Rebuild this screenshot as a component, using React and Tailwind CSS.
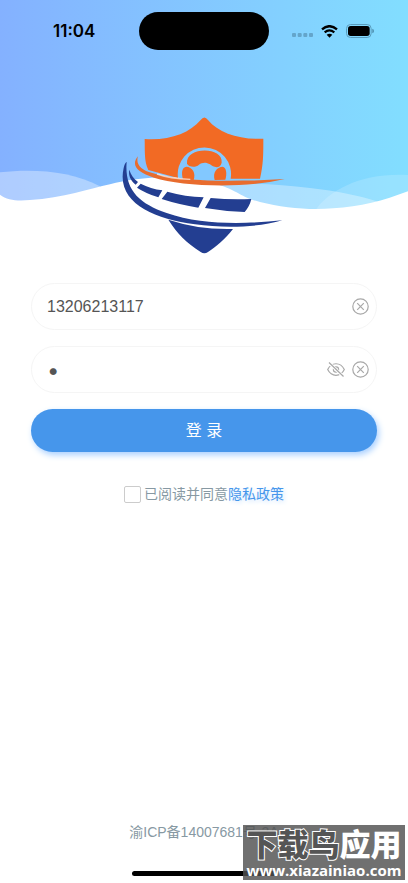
import { useState } from "react";

function StatusBar() {
  return (
    <div className="grid h-[62px] grid-cols-[1fr_130px_1fr] items-center">
      <time className="pl-[53px] font-['Inter',sans-serif] text-[17px] leading-6 font-semibold text-black">11:04</time>
      <div className="h-[38px] rounded-full bg-black" />
      <div className="flex items-center justify-end gap-2 pr-[34px]">
        <svg className="mt-2 h-1 w-[21px] shrink-0" viewBox="0 0 21 4" fill="#64a5cb" aria-hidden="true">
          <rect x="0" width="4" height="4" rx="1" />
          <rect x="5.7" width="4" height="4" rx="1" />
          <rect x="11.3" width="4" height="4" rx="1" />
          <rect x="17" width="4" height="4" rx="1" />
        </svg>
        <svg className="h-[13px] w-[17px] shrink-0" viewBox="0 0 51 39" aria-hidden="true">
          <path d="M3 13Q25 -6 48 13" fill="none" stroke="#000" strokeWidth="7" />
          <path d="M11 22Q25 10 40 22" fill="none" stroke="#000" strokeWidth="6.5" />
          <path d="M17 29Q25.500 23 34 29L25.500 38Z" fill="#000" />
        </svg>
        <svg className="h-[14px] w-7 shrink-0" viewBox="0 0 84 42" aria-hidden="true">
          <rect x="1.500" y="1.500" width="74" height="39" rx="12" fill="none" stroke="#5a9dbd" strokeWidth="3" />
          <rect x="6" y="6" width="65" height="30" rx="8" fill="#000" />
          <path d="M79 14q5 1 5 7t-5 7z" fill="#4e8faf" />
        </svg>
      </div>
    </div>
  );
}

function Waves() {
  return (
    <svg className="h-[70px] w-full" viewBox="0 0 1224 210" preserveAspectRatio="none" aria-hidden="true">
      <path d="M0 70C100 58 215 66 300 112L300 210H0Z" fill="#fff" fillOpacity=".35" />
      <path d="M600 110C700 98 820 104 930 117C1010 126 1080 140 1130 157L1130 210H600Z" fill="#fff" fillOpacity=".34" />
      <path d="M945 185C990 120 1090 70 1224 78V210H945Z" fill="#fff" fillOpacity=".17" />
      <path d="M0 137C22 153 50 157 90 153C190 148 270 118 330 106C410 84 540 73 640 103C710 121 720 145 780 159C850 177 930 184 1000 178C1080 174 1150 155 1224 127V210H0Z" fill="#fff" />
    </svg>
  );
}

function Logo() {
  return (
    <svg className="mx-auto h-[137px] w-41" viewBox="36 21 492 411" role="img" aria-label="logo">
      <path d="M104 87C178 92 238 70 272 30Q283 15 294 30C326 69 390 90 460 86C460 135 460 162 450 206H362A80 80 0 1 0 204 204L115 180C102 153 105 120 104 87Z" fill="#f26a24" />
      <path d="M205 180H360V209H205Z" fill="#82c8ff" />
      <path d="M231 161C226 109 340 109 335 158C331 178 309 172 300 163C289 156 276 157 267 164C256 174 236 171 231 161Z" fill="#f26a24" />
      <path d="M219 208C213 189 216 171 229 170C247 171 258 188 251 210Z" fill="#f26a24" />
      <path d="M346 209C352 189 348 171 338 170C321 171 307 187 314 210Z" fill="#f26a24" />
      <path d="M84 139C76 163 94 181 127 189C213 216 378 216 524 207C398 237 215 229 132 203C80 186 62 165 84 139Z" fill="#e86c2e" />
      <path d="M141 192C168 202 208 207 241 208" fill="none" stroke="#fff" strokeOpacity=".65" strokeWidth="4" />
      <path d="M50 155C43 237 84 279 170 309C275 346 406 342 517 331C438 354 337 354 255 343C128 327 18 276 41 174Q44 159 50 155Z" fill="#233e91" />
      <path d="M58 179C62 194 71 206 84 216L77 224C60 210 55 195 58 179Z" fill="#233e91" />
      <path d="M92 221Q122 236 157 241L145 262Q107 250 81 233Z" fill="#233e91" />
      <path d="M172 245Q226 260 281 262L265 293Q204 283 155 267Z" fill="#233e91" />
      <path d="M302 264Q363 270 424 267Q419 289 404 306Q343 304 285 294Z" fill="#233e91" />
      <path d="M175 329Q268 360 369 357C345 388 317 411 294 426Q283 434 272 426C229 398 202 371 175 329Z" fill="#233e91" />
    </svg>
  );
}

function ClearButton({ label, onClick }) {
  return (
    <button type="button" aria-label={label} onClick={onClick} className="shrink-0 text-[#a8a8a8]">
      <svg className="size-[17px]" viewBox="0 0 17 17" fill="none" stroke="currentColor" strokeWidth="1.200" aria-hidden="true">
        <circle cx="8.500" cy="8.500" r="7.700" />
        <path d="m5.200 5.200 6.600 6.600m0-6.600-6.600 6.600" />
      </svg>
    </button>
  );
}

function LoginForm() {
  const [phone, setPhone] = useState("13206213117");
  const [password, setPassword] = useState("1");
  const [visible, setVisible] = useState(false);
  const field = "flex h-[47px] items-center gap-[7px] rounded-full border border-[#f5f5f5] bg-white pr-[7px] pl-[15px]";
  const input = "h-full min-w-0 flex-1 bg-transparent text-[#555] outline-none";
  return (
    <form className="flex flex-col gap-4 px-[31px]" onSubmit={(e) => e.preventDefault()}>
      <div className={field}>
        <input className={`${input} text-[16px]`} aria-label="手机号" type="tel" value={phone} onChange={(e) => setPhone(e.target.value)} />
        <ClearButton label="清空手机号" onClick={() => setPhone("")} />
      </div>
      <div className={field}>
        <input
          className={`${input} ${visible ? "text-[16px]" : "font-['Inter',sans-serif] text-[22px]"}`}
          aria-label="密码"
          type={visible ? "text" : "password"}
          value={password}
          onChange={(e) => setPassword(e.target.value)}
        />
        <button type="button" aria-label="显示密码" onClick={() => setVisible(!visible)} className="shrink-0 text-[#a8a8a8]">
          <svg className="h-[15px] w-[18px]" viewBox="0 0 18 15" fill="none" stroke="currentColor" strokeWidth="1.200" aria-hidden="true">
            <path d="M.700 7.500C4.500-.200 13.500-.200 17.300 7.500C13.500 15.200 4.500 15.200.700 7.500Z" />
            <circle cx="9" cy="7.500" r="2.600" />
            <path d="M1.500.500 16.500 14.500" stroke="#fff" strokeWidth="3" />
            <path d="M2 .500 16.500 14.500" />
          </svg>
        </button>
        <ClearButton label="清空密码" onClick={() => setPassword("")} />
      </div>
      <button type="submit" className="h-[43px] rounded-full bg-[#4696eb] text-[16px] text-white shadow-[2px_3px_6px_#a9d0ff]">
        登 录
      </button>
      <div className="mt-4 flex items-center justify-center gap-[3px] text-[14px] leading-5 text-[#8799a3]">
        <input id="agree" type="checkbox" className="size-[17px] appearance-none rounded-xs border border-[#ccc] bg-white checked:bg-[#4696eb]" />
        <p>
          <label htmlFor="agree">已阅读并同意</label>
          <a href="#privacy" className="text-[#4696eb] [text-shadow:2px_2px_4px_#cfe5ff]">隐私政策</a>
        </p>
      </div>
    </form>
  );
}

function Watermark() {
  return (
    <div className="absolute right-[3px] bottom-[3px] flex h-[55px] w-[162px] flex-col items-center justify-end bg-[#505050]/82 pb-[2px] text-white">
      <div className="flex items-center text-[31px] leading-8 font-black">
        <span className="text-[#555] [-webkit-text-stroke:2px_#fff] [paint-order:stroke_fill]">下载鸟</span>
        <span>应用</span>
      </div>
      <div className="font-['Open_Sans',sans-serif] text-[15px] leading-4 font-bold">www.xiazainiao.com</div>
    </div>
  );
}

export default function App() {
  return (
    <main className="relative flex min-h-screen flex-col overflow-hidden bg-white font-['Liberation_Sans','Noto_Sans_CJK_SC',sans-serif]">
      <div className="absolute inset-x-0 top-0 flex h-[219px] items-end bg-linear-to-r from-[#84b1ff] to-[#82deff]">
        <Waves />
      </div>
      <div className="relative flex flex-1 flex-col">
        <StatusBar />
        <div className="pt-[55px] pb-[29px]">
          <Logo />
        </div>
        <LoginForm />
        <footer className="mt-auto flex flex-col items-center gap-[29px] pb-[7px] text-[14px] leading-5 text-[#8799a3]">
          <p>渝ICP备14007681号-3A</p>
          <div className="h-[5px] w-36 rounded-full bg-black" />
        </footer>
      </div>
      <Watermark />
    </main>
  );
}
